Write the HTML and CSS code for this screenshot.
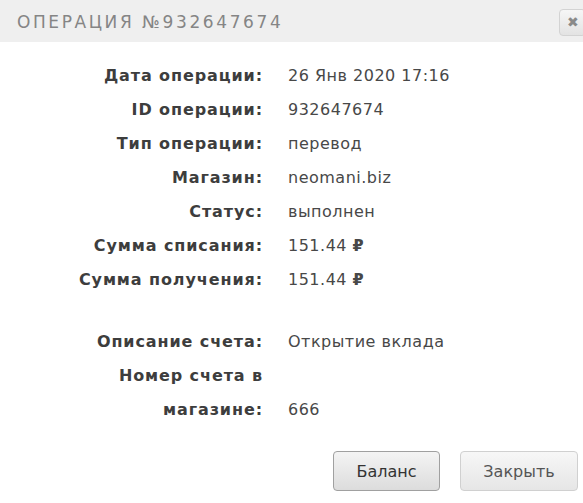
FILE: index.html
```html
<!DOCTYPE html>
<html lang="ru">
<head>
    <meta charset="UTF-8">
    <meta name="viewport" content="width=device-width, initial-scale=1.0">
    <title>Операция №932647674</title>
    <link rel="stylesheet" href="styles.css">
</head>
<body>

    <div class="dialog">
        <div class="dialog-header">
            <span class="dialog-title">Операция №932647674</span>
            <button class="close-btn" title="Закрыть">&#10006;</button>
        </div>

        <div class="details">
            <div class="label">Дата операции:</div>
            <div class="value">26 Янв 2020 17:16</div>

            <div class="label">ID операции:</div>
            <div class="value">932647674</div>

            <div class="label">Тип операции:</div>
            <div class="value">перевод</div>

            <div class="label">Магазин:</div>
            <div class="value">neomani.biz</div>

            <div class="label">Статус:</div>
            <div class="value">выполнен</div>

            <div class="label">Сумма списания:</div>
            <div class="value">151.44 <span class="rub">&#8381;</span></div>

            <div class="label">Сумма получения:</div>
            <div class="value">151.44 <span class="rub">&#8381;</span></div>

            <div class="spacer"></div>

            <div class="label">Описание счета:</div>
            <div class="value">Открытие вклада</div>

            <div class="label">Номер счета в<br>магазине:</div>
            <div class="value bottom">666</div>
        </div>

        <div class="dialog-footer">
            <button class="button">Баланс</button>
            <button class="button light">Закрыть</button>
        </div>
    </div>

</body>
</html>
```

FILE: styles.css
```css
body {
    margin: 0;
    background-color: #fff;
    font-family: "DejaVu Sans", sans-serif;
}
.dialog {
    width: 583px;
    height: 503px;
    overflow: hidden;
}
.dialog-header {
    display: flex;
    justify-content: space-between;
    align-items: center;
    height: 42px;
    padding-left: 17px;
    background-color: #efefef;
}
.dialog-title {
    font-size: 17px;
    letter-spacing: 2.6px;
    text-transform: uppercase;
    color: #858585;
    margin-top: 2px;
}
.close-btn {
    width: 27px;
    height: 27px;
    margin-right: -3px;
    margin-top: 2px;
    padding: 0;
    font-size: 14px;
    color: #8a8a8a;
    border: 1px solid #d3d3d3;
    border-radius: 4px;
    background: linear-gradient(#f6f6f6, #e3e3e3);
}
.details {
    display: grid;
    grid-template-columns: 263px auto;
    column-gap: 25px;
    padding-top: 17px;
    font-size: 16px;
    line-height: 34px;
}
.label {
    text-align: right;
    font-weight: bold;
    letter-spacing: 0.9px;
    color: #3d3d3d;
}
.value {
    letter-spacing: 0.5px;
    color: #484848;
}
.value.bottom {
    align-self: end;
}
.rub {
    font-weight: bold;
}
.spacer {
    grid-column: 1 / 3;
    height: 28px;
}
.dialog-footer {
    display: flex;
    justify-content: flex-end;
    gap: 20px;
    margin-top: 24px;
    padding-right: 5px;
}
.button {
    width: 107px;
    height: 40px;
    font-family: "DejaVu Sans", sans-serif;
    font-size: 16px;
    color: #333;
    border: 1px solid #a0a0a0;
    border-radius: 4px;
    background: linear-gradient(#f4f4f4, #e8e8e8 50%, #dcdcdc);
    cursor: pointer;
}
.button.light {
    width: 118px;
    color: #555;
    border-color: #d0d0d0;
    background: linear-gradient(#f7f7f7, #eeeeee 50%, #e6e6e6);
}
```
